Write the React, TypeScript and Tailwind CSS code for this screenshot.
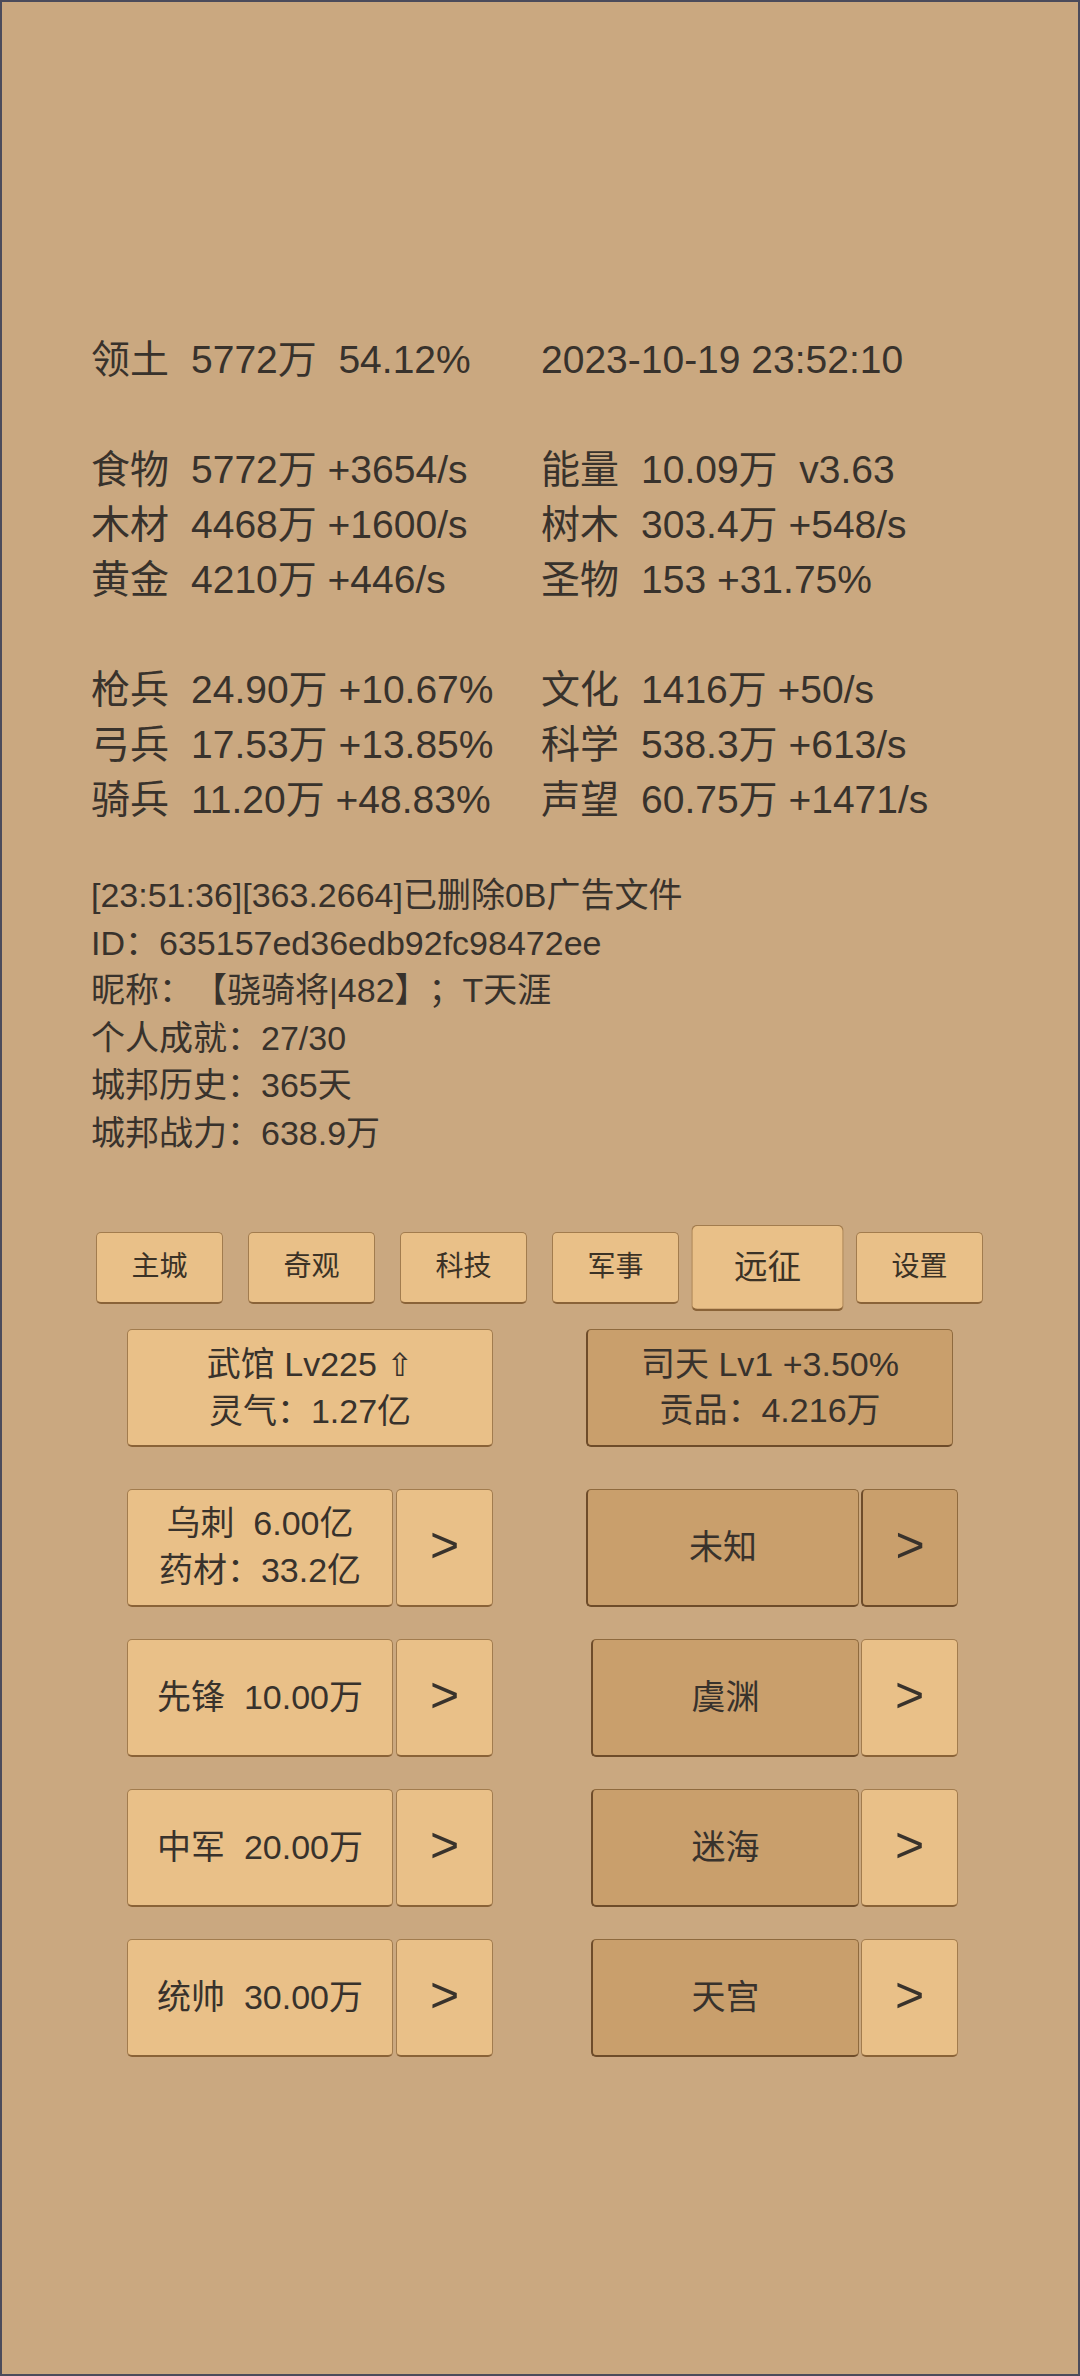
import React from 'react'

const FONT = { fontFamily: '"Liberation Sans", "Noto Sans CJK SC", sans-serif' }

type Cell = { label?: string; value: string }
type StatRow = [Cell, Cell] | null

const stats: StatRow[] = [
  [{ label: '领土', value: '5772万  54.12%' }, { value: '2023-10-19 23:52:10' }],
  null,
  [{ label: '食物', value: '5772万 +3654/s' }, { label: '能量', value: '10.09万  v3.63' }],
  [{ label: '木材', value: '4468万 +1600/s' }, { label: '树木', value: '303.4万 +548/s' }],
  [{ label: '黄金', value: '4210万 +446/s' }, { label: '圣物', value: '153 +31.75%' }],
  null,
  [{ label: '枪兵', value: '24.90万 +10.67%' }, { label: '文化', value: '1416万 +50/s' }],
  [{ label: '弓兵', value: '17.53万 +13.85%' }, { label: '科学', value: '538.3万 +613/s' }],
  [{ label: '骑兵', value: '11.20万 +48.83%' }, { label: '声望', value: '60.75万 +1471/s' }],
]

const logs = [
  '[23:51:36][363.2664]已删除0B广告文件',
  'ID：635157ed36edb92fc98472ee',
  '昵称：【骁骑将|482】；T天涯',
  '个人成就：27/30',
  '城邦历史：365天',
  '城邦战力：638.9万',
]

const tabs = ['主城', '奇观', '科技', '军事', '远征', '设置']

const light = 'bg-[#e9c088] border border-[#a27c4e] border-b-2 border-b-[#8a6338] rounded-[5px]'
const dark = 'bg-[#c99f6c] border border-[#8f6a3e] border-b-2 border-l-2 border-b-[#6e4c2a] border-l-[#6e4c2a] rounded-[5px]'

function StatCell({ cell }: { cell: Cell }) {
  if (!cell.label) return <span className="whitespace-pre">{cell.value}</span>
  return (
    <div className="flex">
      <span className="w-[100px] shrink-0">{cell.label}</span>
      <span className="whitespace-pre">{cell.value}</span>
    </div>
  )
}

function ArrowBtn({ isDark }: { isDark?: boolean }) {
  return (
    <div className={`w-[97px] h-full flex items-center justify-center text-[50px] leading-none pb-[4px] ${isDark ? dark : light}`}>
      &gt;
    </div>
  )
}

export default function App() {
  const leftRows = [
    ['乌刺  6.00亿', '药材：33.2亿'],
    ['先锋  10.00万'],
    ['中军  20.00万'],
    ['统帅  30.00万'],
  ]
  const rightRows = ['未知', '虞渊', '迷海', '天宫']

  return (
    <div
      className="w-[1080px] h-[2376px] bg-[#caa880] border-2 border-[#4b4b5b] text-[#38322c] flex flex-col overflow-hidden [text-spacing-trim:space-all]"
      style={FONT}
    >
      {/* stats */}
      <div className="pt-[330px] pl-[89px] text-[39px] leading-[55px]">
        {stats.map((row, i) =>
          row ? (
            <div key={i} className="grid grid-cols-[450px_1fr] h-[55px]">
              <StatCell cell={row[0]} />
              <StatCell cell={row[1]} />
            </div>
          ) : (
            <div key={i} className="h-[55px]" />
          )
        )}
      </div>

      {/* log */}
      <div className="mt-[45px] pl-[89px] text-[34px] leading-[47.6px]">
        {logs.map((l) => (
          <div key={l}>{l}</div>
        ))}
      </div>

      {/* tabs */}
      <div className="mt-[74px] pl-[94px] flex gap-[25px]">
        {tabs.map((t) => (
          <div
            key={t}
            className={`w-[127px] h-[72px] flex items-center justify-center text-[28px] text-[#3b3226] ${light} ${
              t === '远征' ? 'scale-[1.2]' : ''
            }`}
          >
            {t}
          </div>
        ))}
      </div>

      {/* buildings */}
      <div className="mt-[25px] pl-[125px] flex gap-[93px] text-[34px]">
        <div className={`w-[366px] h-[118px] flex flex-col items-center justify-center leading-[46px] ${light}`}>
          <div className="whitespace-pre">
            武馆 Lv225 <span style={{ fontFamily: '"DejaVu Sans", sans-serif' }} className="text-[32px]">⇧</span>
          </div>
          <div>灵气：1.27亿</div>
        </div>
        <div className={`w-[367px] h-[118px] flex flex-col items-center justify-center leading-[46px] ${dark}`}>
          <div>司天 Lv1 +3.50%</div>
          <div>贡品：4.216万</div>
        </div>
      </div>

      {/* expedition rows */}
      <div className="mt-[42px] flex flex-col gap-[32px] text-[34px]">
        {leftRows.map((lines, i) => (
          <div key={i} className="pl-[125px] flex h-[118px]">
            <div className="w-[366px] flex gap-[3px] h-full">
              <div className={`w-[266px] h-full flex flex-col items-center justify-center leading-[47px] ${light}`}>
                {lines.map((l) => (
                  <div key={l} className="whitespace-pre">{l}</div>
                ))}
              </div>
              <ArrowBtn />
            </div>
            <div className={`flex gap-[2px] h-full ${i === 0 ? 'ml-[93px]' : 'ml-[98px]'}`}>
              <div className={`${i === 0 ? 'w-[273px]' : 'w-[268px]'} h-full flex items-center justify-center ${dark}`}>
                {rightRows[i]}
              </div>
              <ArrowBtn isDark={i === 0} />
            </div>
          </div>
        ))}
      </div>
    </div>
  )
}
